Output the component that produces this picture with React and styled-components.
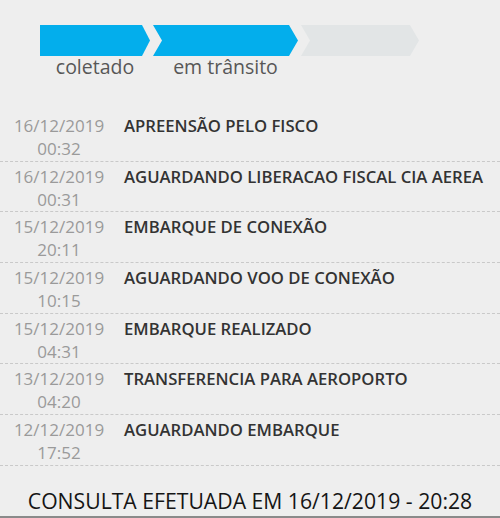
import React from "react";
import styled, { createGlobalStyle } from "styled-components";

const Global = createGlobalStyle`
  html, body { margin: 0; padding: 0; background: #eeeeee; }
  body { font-family: "Open Sans", "Noto Sans", sans-serif; }
`;

const Page = styled.div`
  width: 500px;
  height: 518px;
  box-sizing: border-box;
  background: #eeeeee;
  display: flex;
  flex-direction: column;
  border-bottom: 2px solid #8a8a8a;
  overflow: hidden;
`;

const Progress = styled.div`
  display: flex;
  gap: 3px;
  padding: 25px 0 0 40px;
`;

const Step = styled.div`
  display: flex;
  flex-direction: column;
  align-items: center;
  width: ${(p) => p.$w}px;
`;

const Chevron = styled.div`
  width: 100%;
  height: 31px;
  background: ${(p) => (p.$active ? "#03aeec" : "#e2e5e6")};
  clip-path: ${(p) =>
    p.$first
      ? `polygon(0 0, calc(100% - 8px) 0, 100% 50%, calc(100% - 8px) 100%, 0 100%)`
      : `polygon(0 0, calc(100% - 9px) 0, 100% 50%, calc(100% - 9px) 100%, 0 100%, 9px 50%)`};
`;

const StepLabel = styled.span`
  font-size: 19.5px;
  color: #575757;
  line-height: 22px;
  min-height: 22px;
`;

const List = styled.div`
  display: flex;
  flex-direction: column;
  margin-top: 33px;
`;

const Row = styled.div`
  display: flex;
  align-items: flex-start;
  height: 50.7px;
  box-sizing: border-box;
  padding-top: 3px;
  border-bottom: 1px dashed #c9c9c9;
`;

const When = styled.div`
  display: flex;
  flex-direction: column;
  align-items: center;
  width: 92px;
  margin-left: 13px;
  color: #9a9a9a;
  font-size: 17px;
  line-height: 23px;
`;

const Title = styled.div`
  margin-left: 19px;
  color: #333333;
  font-weight: 600;
  font-size: 16.7px;
  line-height: 23px;
`;

const Footer = styled.div`
  flex: 1;
  display: flex;
  align-items: center;
  justify-content: center;
  font-size: 21.2px;
  color: #151515;
  padding-top: 20px;
`;

const steps = [
  { label: "coletado", w: 110, active: true, first: true },
  { label: "em trânsito", w: 145, active: true },
  { label: "", w: 118, active: false },
];

const events = [
  ["16/12/2019", "00:32", "APREENSÃO PELO FISCO"],
  ["16/12/2019", "00:31", "AGUARDANDO LIBERACAO FISCAL CIA AEREA"],
  ["15/12/2019", "20:11", "EMBARQUE DE CONEXÃO"],
  ["15/12/2019", "10:15", "AGUARDANDO VOO DE CONEXÃO"],
  ["15/12/2019", "04:31", "EMBARQUE REALIZADO"],
  ["13/12/2019", "04:20", "TRANSFERENCIA PARA AEROPORTO"],
  ["12/12/2019", "17:52", "AGUARDANDO EMBARQUE"],
];

export default function App() {
  return (
    <>
      <Global />
      <Page>
        <Progress>
          {steps.map((s, i) => (
            <Step key={i} $w={s.w}>
              <Chevron $active={s.active} $first={s.first} />
              <StepLabel>{s.label}</StepLabel>
            </Step>
          ))}
        </Progress>
        <List>
          {events.map(([d, t, title], i) => (
            <Row key={i}>
              <When>
                <span>{d}</span>
                <span>{t}</span>
              </When>
              <Title>{title}</Title>
            </Row>
          ))}
        </List>
        <Footer>CONSULTA EFETUADA EM 16/12/2019 - 20:28</Footer>
      </Page>
    </>
  );
}
